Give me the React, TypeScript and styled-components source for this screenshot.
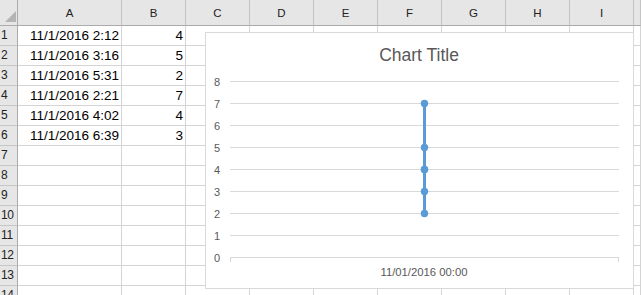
import React from "react";
import styled, { createGlobalStyle } from "styled-components";

const Global = createGlobalStyle`
  html, body { margin: 0; padding: 0; background: #ffffff; overflow: hidden; }
  body { font-family: "Liberation Sans", Arial, sans-serif; }
`;

const Sheet = styled.div`
  position: relative;
  width: 641px;
  height: 295px;
  overflow: hidden;
  background: #ffffff;
`;

const Grid = styled.div`
  display: grid;
  grid-template-columns: 18px 104px repeat(8, 64px) 1fr;
  grid-template-rows: 26px;
  grid-auto-rows: 20px;
`;

const Corner = styled.div`
  box-sizing: border-box;
  position: relative;
  background: #e6e6e6;
  border-right: 1px solid #ababab;
  border-bottom: 1px solid #ababab;
`;

const CornerTriangle = styled.div`
  position: absolute;
  right: 1px;
  bottom: 3px;
  width: 0;
  height: 0;
  border-left: 11px solid transparent;
  border-bottom: 11px solid #b4b4b4;
`;

const ColHead = styled.div`
  box-sizing: border-box;
  background: #e6e6e6;
  border-right: 1px solid #c4c4c4;
  border-bottom: 1px solid #ababab;
  color: #222222;
  font-size: 11.5px;
  display: flex;
  align-items: center;
  justify-content: center;
  padding-top: 1px;
`;

const RowHead = styled.div`
  box-sizing: border-box;
  background: #e6e6e6;
  border-right: 1px solid #ababab;
  border-bottom: 1px solid #c6c6c6;
  color: #222222;
  font-size: 12px;
  display: flex;
  align-items: flex-end;
  padding: 0 0 4px 1px;
  line-height: 1;
  letter-spacing: -0.3px;
  overflow: hidden;
`;

const Cell = styled.div<{ $align?: "left" | "right" }>`
  box-sizing: border-box;
  border-right: 1px solid #d4d4d4;
  border-bottom: 1px solid #d4d4d4;
  color: #000000;
  font-size: 13.5px;
  line-height: 1;
  display: flex;
  align-items: flex-end;
  justify-content: ${(p) => (p.$align === "right" ? "flex-end" : "flex-start")};
  padding: 0 2px 3px 2px;
  white-space: nowrap;
`;

const ChartBox = styled.div`
  position: absolute;
  left: 205px;
  top: 32px;
  width: 429px;
  height: 257px;
  box-sizing: border-box;
  background: #ffffff;
  border: 1px solid #d9d9d9;
`;

const columns = ["A", "B", "C", "D", "E", "F", "G", "H", "I"];
const data: [string, number][] = [
  ["11/1/2016 2:12", 4],
  ["11/1/2016 3:16", 5],
  ["11/1/2016 5:31", 2],
  ["11/1/2016 2:21", 7],
  ["11/1/2016 4:02", 4],
  ["11/1/2016 6:39", 3],
];

const gridY = (v: number) => 224.5 - v * 22;

const Chart: React.FC = () => {
  const values = data.map((d) => d[1]);
  const min = Math.min(...values);
  const max = Math.max(...values);
  const x = 218.5;
  return (
    <ChartBox>
      <svg width="427" height="255" viewBox="0 0 427 255">
        <text
          x="213"
          y="28"
          textAnchor="middle"
          fontFamily="Liberation Sans, Arial, sans-serif"
          fontSize="17.5"
          fill="#595959"
        >
          Chart Title
        </text>
        {[0, 1, 2, 3, 4, 5, 6, 7, 8].map((v) => (
          <g key={v}>
            <line x1="24" x2="413" y1={gridY(v)} y2={gridY(v)} stroke="#d9d9d9" strokeWidth="1" />
            <text
              x="14"
              y={gridY(v) + 4}
              textAnchor="end"
              fontFamily="Liberation Sans, Arial, sans-serif"
              fontSize="11"
              fill="#595959"
            >
              {v}
            </text>
          </g>
        ))}
        <line x1="24.5" x2="24.5" y1="224.5" y2="229" stroke="#d9d9d9" />
        <line x1="412.5" x2="412.5" y1="224.5" y2="229" stroke="#d9d9d9" />
        <line x1={x} x2={x} y1={gridY(max)} y2={gridY(min)} stroke="#5b9bd5" strokeWidth="3" />
        {values.map((v, i) => (
          <circle key={i} cx={x} cy={gridY(v)} r="3.7" fill="#5b9bd5" />
        ))}
        <text
          x="218"
          y="243"
          textAnchor="middle"
          fontFamily="Liberation Sans, Arial, sans-serif"
          fontSize="11.3"
          fill="#595959"
        >
          11/01/2016 00:00
        </text>
      </svg>
    </ChartBox>
  );
};

export default function App() {
  const rows = Array.from({ length: 14 }, (_, i) => i + 1);
  return (
    <>
      <Global />
      <Sheet>
        <Grid>
          <Corner>
            <CornerTriangle />
          </Corner>
          {columns.map((c) => (
            <ColHead key={c}>{c}</ColHead>
          ))}
          <ColHead />
          {rows.map((r) => {
            const d = data[r - 1];
            return (
              <React.Fragment key={r}>
                <RowHead>{r}</RowHead>
                <Cell $align="right">{d ? d[0] : ""}</Cell>
                <Cell $align="right">{d ? d[1] : ""}</Cell>
                {columns.slice(2).map((c) => (
                  <Cell key={c} />
                ))}
                <Cell />
              </React.Fragment>
            );
          })}
        </Grid>
        <Chart />
      </Sheet>
    </>
  );
}
